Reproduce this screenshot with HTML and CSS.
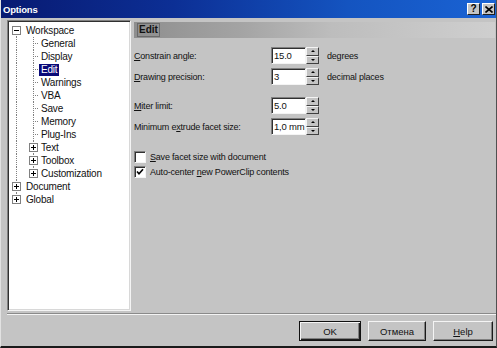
FILE: index.html
```html
<!DOCTYPE html>
<html>
<head>
<meta charset="utf-8">
<link rel="stylesheet" href="styles.css">
</head>
<body>
<div class="window">
  <div class="titlebar">
    <span class="title">Options</span>
    <div class="tb-btns">
      <span class="tb-btn">?</span>
      <span class="tb-btn">
        <svg width="8" height="7" viewBox="0 0 8 7"><path d="M0.5 0.5 L7.5 6.5 M7.5 0.5 L0.5 6.5" stroke="#000" stroke-width="1.6" fill="none"/></svg>
      </span>
    </div>
  </div>
  <div class="main">
    <div class="tree">
      <div class="row l0 first"><span class="exp minus"></span><span class="lbl">Workspace</span></div>
      <div class="children">
        <div class="row l1"><span class="lbl">General</span></div>
        <div class="row l1"><span class="lbl">Display</span></div>
        <div class="row l1"><span class="lbl sel">Edit</span></div>
        <div class="row l1"><span class="lbl">Warnings</span></div>
        <div class="row l1"><span class="lbl">VBA</span></div>
        <div class="row l1"><span class="lbl">Save</span></div>
        <div class="row l1"><span class="lbl">Memory</span></div>
        <div class="row l1"><span class="lbl">Plug-Ins</span></div>
        <div class="row l1 has-exp"><span class="exp plus"></span><span class="lbl">Text</span></div>
        <div class="row l1 has-exp"><span class="exp plus"></span><span class="lbl">Toolbox</span></div>
        <div class="row l1 has-exp last"><span class="exp plus"></span><span class="lbl">Customization</span></div>
      </div>
      <div class="row l0 mid"><span class="exp plus"></span><span class="lbl">Document</span></div>
      <div class="row l0 end"><span class="exp plus"></span><span class="lbl">Global</span></div>
    </div>
    <div class="panel">
      <div class="panel-head"><span>Edit</span></div>
      <div class="fields">
        <div class="field">
          <span class="label"><u>C</u>onstrain angle:</span>
          <span class="input">15.0</span>
          <span class="spin"><span class="sb up"></span><span class="sb down"></span></span>
          <span class="unit">degrees</span>
        </div>
        <div class="field">
          <span class="label"><u>D</u>rawing precision:</span>
          <span class="input">3</span>
          <span class="spin"><span class="sb up"></span><span class="sb down"></span></span>
          <span class="unit">decimal places</span>
        </div>
      </div>
      <div class="fields second">
        <div class="field">
          <span class="label"><u>M</u>iter limit:</span>
          <span class="input">5.0</span>
          <span class="spin"><span class="sb up"></span><span class="sb down"></span></span>
        </div>
        <div class="field">
          <span class="label">Minimum e<u>x</u>trude facet size:</span>
          <span class="input">1,0 mm</span>
          <span class="spin"><span class="sb up"></span><span class="sb down"></span></span>
        </div>
      </div>
      <div class="checks">
        <div class="check"><span class="box"></span><span><u>S</u>ave facet size with document</span></div>
        <div class="check"><span class="box">
          <svg width="8" height="8" viewBox="0 0 8 8"><path d="M1 3.5 L3 5.8 L7 1.2" stroke="#000" stroke-width="1.6" fill="none"/></svg>
        </span><span>Auto-center <u>n</u>ew PowerClip contents</span></div>
      </div>
    </div>
  </div>
  <div class="footer">
    <div class="sep"></div>
    <div class="buttons">
      <span class="btn default">OK</span>
      <span class="btn">Отмена</span>
      <span class="btn"><u>H</u>elp</span>
    </div>
  </div>
</div>
</body>
</html>
```
FILE: styles.css
```css
html, body {
  margin: 0;
  padding: 0;
  background: #c4c4c4;
}
body {
  font-family: "Liberation Sans", Arial, sans-serif;
  font-size: 10px;
  color: #111;
}
.window {
  width: 497px;
  height: 348px;
  box-sizing: border-box;
  background: #c4c4c4;
  border-left: 1px solid #e2e2e2;
  border-right: 1px solid #505050;
  border-bottom: 2px solid #1a1a1a;
  display: flex;
  flex-direction: column;
  overflow: hidden;
}
.titlebar {
  height: 18px;
  margin-left: -1px;
  margin-right: -1px;
  flex: none;
  background: linear-gradient(90deg, #081a72 0%, #0c2f95 35%, #1454c0 70%, #1a63d4 100%);
  display: flex;
  align-items: center;
  justify-content: space-between;
  padding: 0 2px 0 3px;
}
.title {
  color: #fff;
  font-weight: bold;
  font-size: 9.5px;
  letter-spacing: -0.2px;
}
.tb-btns {
  display: flex;
  gap: 2px;
}
.tb-btn {
  width: 13px;
  height: 12px;
  box-sizing: border-box;
  background: #c4c4c4;
  border: 1px solid;
  border-color: #fff #202020 #202020 #fff;
  display: flex;
  align-items: center;
  justify-content: center;
  font-weight: bold;
  font-size: 10px;
  line-height: 10px;
  color: #000;
}
.main {
  height: 293px;
  flex: none;
  display: flex;
  gap: 3px;
  padding: 2px 1px 0 6px;
  box-sizing: border-box;
}
.tree {
  width: 124px;
  height: 291px;
  box-sizing: border-box;
  background: #fff;
  border: 1px solid;
  border-color: #808080 #f4f4f4 #f4f4f4 #808080;
  box-shadow: inset 1px 1px 0 #303030, inset -1px -1px 0 #d8d8d8;
  padding: 3px 0 0 1px;
  letter-spacing: -0.2px;
}
.row {
  height: 13px;
  display: flex;
  align-items: center;
  white-space: nowrap;
  background-repeat: no-repeat;
}
.exp {
  width: 9px;
  height: 9px;
  box-sizing: border-box;
  border: 1px solid #808080;
  background-color: #fff;
  background-repeat: no-repeat;
  flex: none;
}
.exp.minus {
  background-image: linear-gradient(#000, #000);
  background-position: center;
  background-size: 5px 1px;
}
.exp.plus {
  background-image: linear-gradient(#000, #000), linear-gradient(#000, #000);
  background-position: center, center;
  background-size: 5px 1px, 1px 5px;
}
.lbl {
  padding: 0 2px;
  line-height: 12px;
}
.lbl.sel {
  background: #0a0a78;
  color: #fff;
}
.l0 .exp {
  margin-left: 3px;
}
.l0 .lbl {
  margin-left: 3px;
}
.l0.first {
  background-image: repeating-linear-gradient(to bottom, #808080 0 1px, transparent 1px 2px);
  background-position: 7px 6px;
  background-size: 1px 7px;
}
.l0.mid {
  background-image: repeating-linear-gradient(to bottom, #808080 0 1px, transparent 1px 2px);
  background-position: 7px 0;
  background-size: 1px 13px;
}
.l0.end {
  background-image: repeating-linear-gradient(to bottom, #808080 0 1px, transparent 1px 2px);
  background-position: 7px 0;
  background-size: 1px 6px;
}
.l1 {
  background-image:
    repeating-linear-gradient(to bottom, #808080 0 1px, transparent 1px 2px),
    repeating-linear-gradient(to bottom, #808080 0 1px, transparent 1px 2px),
    repeating-linear-gradient(to right, #808080 0 1px, transparent 1px 2px);
  background-position: 7px 0, 24px 0, 24px 6px;
  background-size: 1px 13px, 1px 13px, 6px 1px;
}
.l1.last {
  background-size: 1px 13px, 1px 7px, 6px 1px;
}
.l1 .lbl {
  margin-left: 30px;
}
.l1.has-exp .exp {
  margin-left: 20px;
}
.l1.has-exp .lbl {
  margin-left: 1px;
}
.panel {
  flex: 1;
  display: flex;
  flex-direction: column;
  font-size: 9px;
  letter-spacing: -0.2px;
}
.panel-head {
  height: 16px;
  margin-top: 2px;
  background: linear-gradient(90deg, #8e8e8e 0%, #a4a4a4 30%, #bdbdbd 55%, #cfcfcf 100%);
  display: flex;
  align-items: center;
  padding-left: 3px;
}
.panel-head span {
  font-weight: bold;
  font-size: 10px;
  letter-spacing: 0;
  color: #111;
  padding: 0 1px;
  border: 1px solid #6a6a6a;
  line-height: 12px;
}
.fields {
  margin-top: 9px;
  display: flex;
  flex-direction: column;
  gap: 4px;
}
.fields.second {
  margin-top: 12px;
}
.field {
  display: grid;
  grid-template-columns: 137px 35px 13px auto;
  height: 17px;
  align-items: center;
}
.input {
  height: 17px;
  box-sizing: border-box;
  background: #fff;
  border: 1px solid;
  border-color: #808080 #f4f4f4 #f4f4f4 #808080;
  box-shadow: inset 1px 1px 0 #303030;
  padding: 2px 0 0 2px;
  line-height: 12px;
  font-size: 9.5px;
  white-space: nowrap;
  overflow: hidden;
}
.spin {
  height: 17px;
  display: flex;
  flex-direction: column;
}
.sb {
  flex: 1;
  box-sizing: border-box;
  background: #c4c4c4;
  border: 1px solid;
  border-color: #f4f4f4 #404040 #404040 #f4f4f4;
  display: flex;
  align-items: center;
  justify-content: center;
}
.sb::after {
  content: "";
  width: 0;
  height: 0;
  border-left: 2px solid transparent;
  border-right: 2px solid transparent;
}
.sb.up::after {
  border-bottom: 2px solid #000;
}
.sb.down::after {
  border-top: 2px solid #000;
}
.unit {
  margin-left: 8px;
}
.checks {
  margin-top: 15px;
  display: flex;
  flex-direction: column;
  gap: 2px;
}
.check {
  height: 13px;
  display: flex;
  align-items: center;
  gap: 4px;
}
.box {
  width: 12px;
  height: 12px;
  box-sizing: border-box;
  background: #fff;
  border: 1px solid;
  border-color: #808080 #f4f4f4 #f4f4f4 #808080;
  box-shadow: inset 1px 1px 0 #303030;
  display: flex;
  align-items: center;
  justify-content: center;
}
.footer {
  flex: 1;
  display: flex;
  flex-direction: column;
}
.sep {
  margin: 2px 0 0 6px;
  border-top: 1px solid #8a8a8a;
  border-bottom: 1px solid #f4f4f4;
}
.buttons {
  margin-top: 6px;
  display: flex;
  justify-content: flex-end;
  gap: 7px;
  padding-right: 3px;
  font-size: 9.5px;
}
.btn {
  height: 20px;
  width: 60px;
  box-sizing: border-box;
  border: 1px solid;
  border-color: #f4f4f4 #1a1a1a #1a1a1a #f4f4f4;
  box-shadow: inset -1px -1px 0 #808080;
  display: flex;
  align-items: center;
  justify-content: center;
  background: #c4c4c4;
}
.btn.default {
  width: 62px;
  border: 1px solid #111;
  box-shadow: inset 1px 1px 0 #f4f4f4, inset -1px -1px 0 #202020, inset -2px -2px 0 #808080;
}
.btn:nth-child(2) {
  width: 58px;
}
```
